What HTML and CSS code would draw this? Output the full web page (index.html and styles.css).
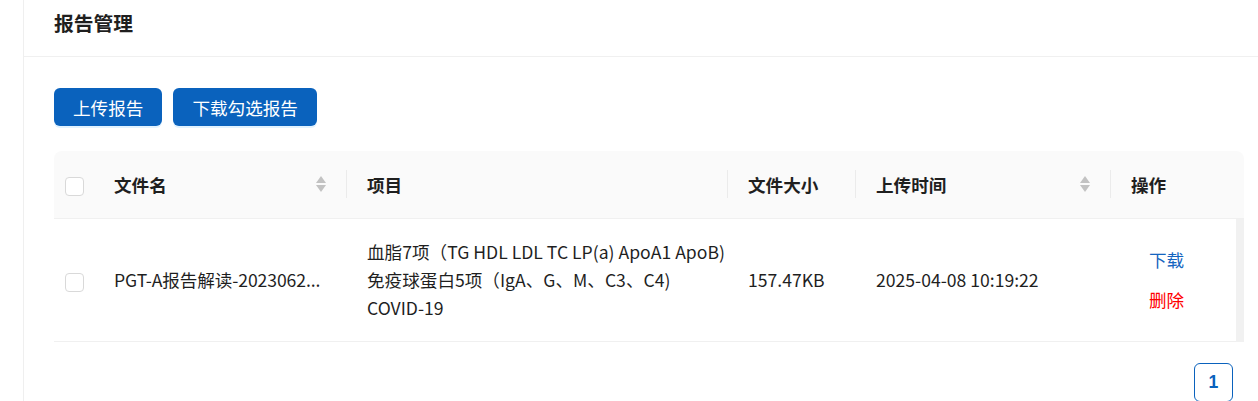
FILE: index.html
```html
<!DOCTYPE html>
<html lang="zh-CN">
<head>
<meta charset="utf-8">
<link rel="stylesheet" href="styles.css">
</head>
<body>
<div class="layout">
  <div class="side"></div>
  <main class="main">
    <div class="title-bar"><h1 class="title">报告管理</h1></div>
    <div class="content">
      <div class="toolbar">
        <button class="btn">上传报告</button>
        <button class="btn">下载勾选报告</button>
      </div>
      <table class="table">
        <colgroup>
          <col class="c-check"><col class="c-name"><col class="c-proj"><col class="c-size"><col class="c-time"><col class="c-act"><col class="c-scroll">
        </colgroup>
        <thead>
          <tr>
            <th class="th-check first"><span class="checkbox"></span></th>
            <th class="sep"><div class="th-inner"><span>文件名</span><span class="sorter"><i class="up"></i><i class="down"></i></span></div></th>
            <th class="sep">项目</th>
            <th class="sep">文件大小</th>
            <th class="sep"><div class="th-inner"><span>上传时间</span><span class="sorter"><i class="up"></i><i class="down"></i></span></div></th>
            <th>操作</th>
            <th class="last"></th>
          </tr>
        </thead>
        <tbody>
          <tr>
            <td class="td-check"><span class="checkbox"></span></td>
            <td class="name" title="PGT-A报告解读-20230628"><span class="fname">PGT-A报告解读-2023062...</span></td>
            <td class="proj">血脂7项（TG HDL LDL TC LP(a) ApoA1 ApoB)<br>免疫球蛋白5项（IgA、G、M、C3、C4)<br>COVID-19</td>
            <td>157.47KB</td>
            <td>2025-04-08 10:19:22</td>
            <td><div class="actions"><a class="link">下载</a><a class="link danger">删除</a></div></td>
            <td class="scroll"></td>
          </tr>
        </tbody>
      </table>
      <div class="pager"><span class="page-item">1</span></div>
    </div>
  </main>
</div>
</body>
</html>
```
FILE: styles.css
```css
* { box-sizing: border-box; }
html, body { margin: 0; padding: 0; background: #fff; }
body {
  font-family: "Noto Sans CJK SC", sans-serif;
  font-size: 17.6px;
  line-height: 1.5715;
  color: rgba(0, 0, 0, 0.88);
  overflow: hidden;
}
.layout { display: flex; min-height: 401px; }
.side { width: 24px; flex: none; border-right: 1px solid #efefef; }
.main { flex: 1; }
.title-bar {
  height: 57px;
  border-bottom: 1px solid #f0f0f0;
  padding-left: 30px;
  display: flex;
  align-items: center;
}
.title {
  margin: 0 0 10px;
  font-size: 19.8px;
  font-weight: 700;
  color: #1f1f1f;
}
.content { padding: 31px 14px 0 30px; }
.toolbar { display: flex; gap: 11px; }
.btn {
  height: 38px;
  padding: 0 19px;
  border: none;
  border-radius: 6px;
  background: #0a62bd;
  color: #fff;
  font-family: inherit;
  font-size: 17.6px;
  box-shadow: 0 2px 0 rgba(5, 145, 255, 0.12);
}
.table {
  margin-top: 25px;
  width: 1190px;
  table-layout: fixed;
  border-collapse: separate;
  border-spacing: 0;
}
.c-check { width: 40px; }
.c-name { width: 253px; }
.c-proj { width: 381px; }
.c-size { width: 128px; }
.c-time { width: 255px; }
.c-act { width: 125px; }
.c-scroll { width: 8px; }
th {
  background: #fafafa;
  text-align: left;
  font-weight: 700;
  color: #1f1f1f;
  padding: 19.5px 20px;
  border-bottom: 1px solid #f0f0f0;
  position: relative;
}
th.first { border-top-left-radius: 8px; }
th.last { border-top-right-radius: 8px; padding: 0; }
th.sep::after {
  content: "";
  position: absolute;
  right: 0;
  top: 50%;
  width: 1px;
  height: 28px;
  transform: translateY(-50%);
  background: rgba(0, 0, 0, 0.06);
}
.th-check, .td-check { padding: 0; text-align: center; }
.th-inner { display: flex; align-items: center; justify-content: space-between; }
.sorter { display: flex; flex-direction: column; gap: 2px; margin-right: 1px; }
.sorter i { display: block; width: 0; height: 0; border-left: 5.5px solid transparent; border-right: 5.5px solid transparent; }
.sorter .up { border-bottom: 7px solid #c2c2c2; }
.sorter .down { border-top: 7px solid #c2c2c2; }
.checkbox {
  display: inline-block;
  width: 19px;
  height: 19px;
  border: 1px solid #d9d9d9;
  border-radius: 4px;
  background: #fff;
  vertical-align: middle;
}
td {
  padding: 19.8px 20px;
  border-bottom: 1px solid #f0f0f0;
  vertical-align: middle;
  color: #1f1f1f;
}
td.name { padding-right: 4px; white-space: nowrap; }
.fname { letter-spacing: -0.1px; }
td.proj { white-space: nowrap; }
td.scroll { padding: 0; background: #f1f1f1; border-bottom: none; }
.actions { display: flex; flex-direction: column; align-items: flex-start; gap: 12px; padding-left: 18px; }
.link { color: #1565c0; cursor: pointer; }
.link.danger { color: #ff0000; }
.pager { display: flex; justify-content: flex-end; padding-right: 11px; margin-top: 21px; }
.page-item {
  width: 39px;
  height: 39px;
  border: 1px solid #0a62bd;
  border-radius: 6px;
  color: #0a62bd;
  font-weight: 700;
  display: flex;
  align-items: center;
  justify-content: center;
  font-family: "Liberation Sans", Arial, sans-serif;
  font-size: 17.6px;
}
```
